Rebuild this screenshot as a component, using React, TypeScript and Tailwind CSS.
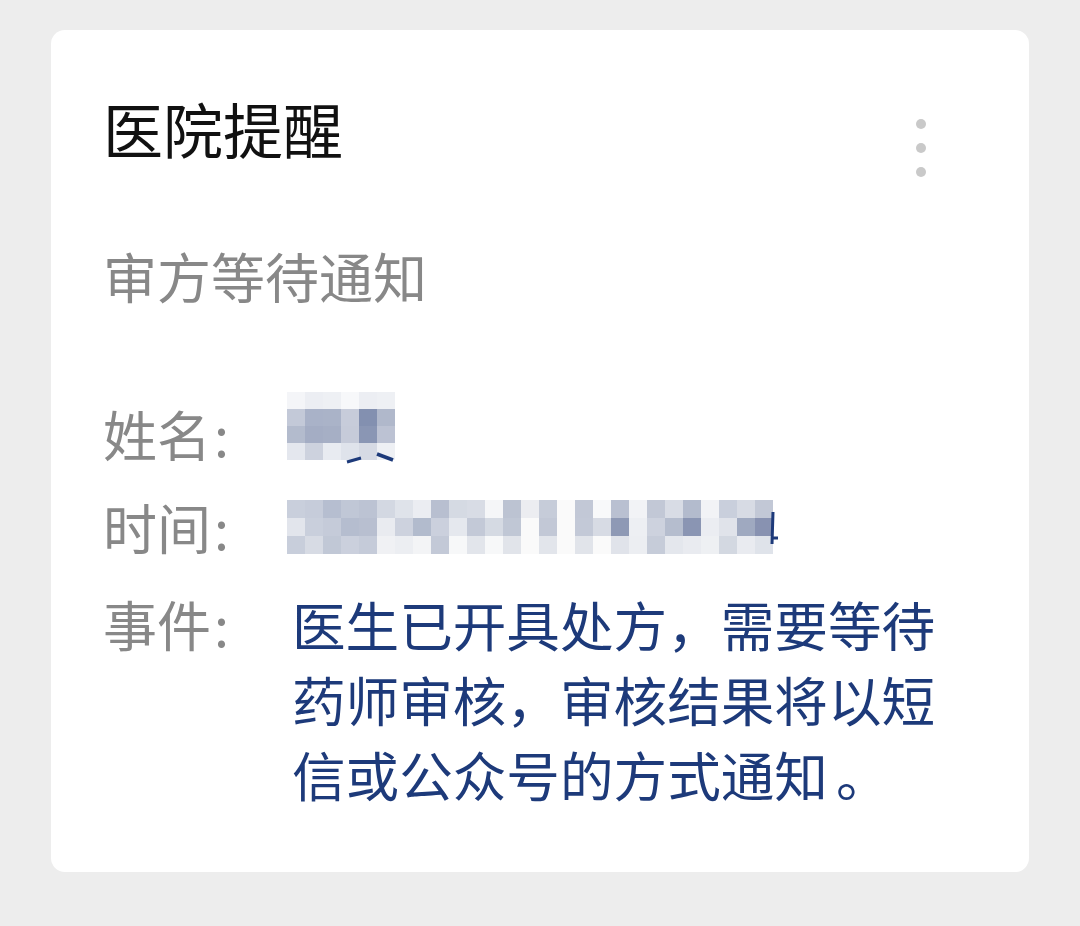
import React from "react";

const nameGrid = [
  ["#f4f5f8", "#eceef3", "#eef0f4", "#f7f8fa", "#eceef3", "#eef0f4"],
  ["#c3c9d8", "#a9b2c8", "#aab3c8", "#c7ccda", "#8390b0", "#b0b8cb"],
  ["#b3bbcd", "#a4adc4", "#a6afc5", "#c6cbd9", "#8a96b4", "#bcc2d3"],
  ["#e4e7ee", "#cdd2de", "#e8ebf1", "#dfe3eb", "#d6dae4", "#eef0f4"],
];

const timeGrid = [
  "c9cfdc c6ccda b6bed0 c0c7d6 bcc3d3 d3d8e2 dfe3ea ebedf2 b8bfd0 d5dae3 d8dce5 f5f6f8 bcc3d2 ecedf1 c6ccd9 fafafa c2c8d6 f8f9fa b9c0d1 f2f3f6 c2c8d6 d8dce5 b3bbcd f2f3f6 c9cfdc d7dbe4 c2c8d6",
  "e2e5ec c9cfdc c5cbd9 b5bdcf b8bfd0 e9ebf0 cdd2de b2bbcd cbd0dd e5e8ee c3c9d7 d5dae3 c0c7d5 fafafa c2c8d6 fafafa c3c9d7 d7dbe4 8e99b5 edeff3 cdd2de b5bdce 8a95b3 ebedf2 e0e3ea 9fa9c0 8892b1",
  "c8cedb d7dbe4 c1c8d6 cbd0dd c5cbd9 f0f1f4 eceef2 f3f4f6 c3c9d7 f7f8f9 e2e5eb f7f8f9 e1e4ea fafafa e2e5eb fafafa e1e4ea fafafa e0e3ea eceef2 c6ccd9 e4e7ed e9ebf0 eef0f3 d3d8e1 e9ebf0 dfe3ea",
].map((r) => r.split(" ").map((c) => "#" + c));

function Mosaic({ grid, cw, ch }: { grid: string[][]; cw: number; ch: number }) {
  return (
    <div className="flex flex-col">
      {grid.map((row, i) => (
        <div key={i} className="flex">
          {row.map((c, j) => (
            <div key={j} style={{ width: cw, height: ch, background: c }} />
          ))}
        </div>
      ))}
    </div>
  );
}

export default function App() {
  return (
    <div
      className="min-h-[926px] bg-[#ededed] pt-[30px] px-[51px]"
      style={{ fontFamily: '"Noto Sans CJK SC", "Noto Sans", sans-serif' }}
    >
      <div className="h-[842px] bg-white rounded-[14px] pl-[52px] pr-[103px] pt-[68px]">
        <div className="flex justify-between items-start">
          <div className="text-[60px] leading-[60px] text-[#111111]">医院提醒</div>
          <div className="flex flex-col gap-[14px] mt-[21px]">
            <div className="w-[10px] h-[10px] rounded-full bg-[#c9c9c9]" />
            <div className="w-[10px] h-[10px] rounded-full bg-[#c9c9c9]" />
            <div className="w-[10px] h-[10px] rounded-full bg-[#c9c9c9]" />
          </div>
        </div>
        <div className="mt-[72px] text-[54px] leading-[54px] text-[#888888]">审方等待通知</div>
        <div className="mt-[93px] flex items-center h-[75px]">
          <div className="w-[184px] text-[54px] leading-[75px] text-[#888888]">
            姓名<span className="ml-[3px]">:</span>
          </div>
          <div className="-mt-[16px] relative">
            <Mosaic grid={nameGrid} cw={18} ch={17} />
            <svg className="absolute left-0 top-0" width="120" height="72" viewBox="0 0 120 72">
              <path d="M60 70 L74 66" stroke="#1d3a7a" strokeWidth="3" fill="none" />
              <path d="M90 62 L106 68" stroke="#1d3a7a" strokeWidth="3.5" fill="none" />
            </svg>
          </div>
        </div>
        <div className="mt-[18px] flex items-center h-[75px]">
          <div className="w-[184px] text-[54px] leading-[75px] text-[#888888]">
            时间<span className="ml-[3px]">:</span>
          </div>
          <div className="relative">
            <Mosaic grid={timeGrid} cw={18} ch={18} />
            <svg className="absolute left-[482px] top-[10px]" width="12" height="40" viewBox="0 0 12 40">
              <path d="M4 2 L3 34 M3 28 L9 28" stroke="#1d3a7a" strokeWidth="3" fill="none" />
            </svg>
          </div>
        </div>
        <div className="mt-[22px] flex items-start">
          <div className="w-[184px] shrink-0 text-[54px] leading-[75px] text-[#888888]">
            事件<span className="ml-[3px]">:</span>
          </div>
          <div className="ml-[5px] whitespace-nowrap text-[53.6px] leading-[75px] text-[#1d3a7a]">
            医生已开具处方，需要等待
            <br />
            药师审核，审核结果将以短
            <br />
            信或公众号的方式通知<span className="ml-[8px]">。</span>
          </div>
        </div>
      </div>
    </div>
  );
}
